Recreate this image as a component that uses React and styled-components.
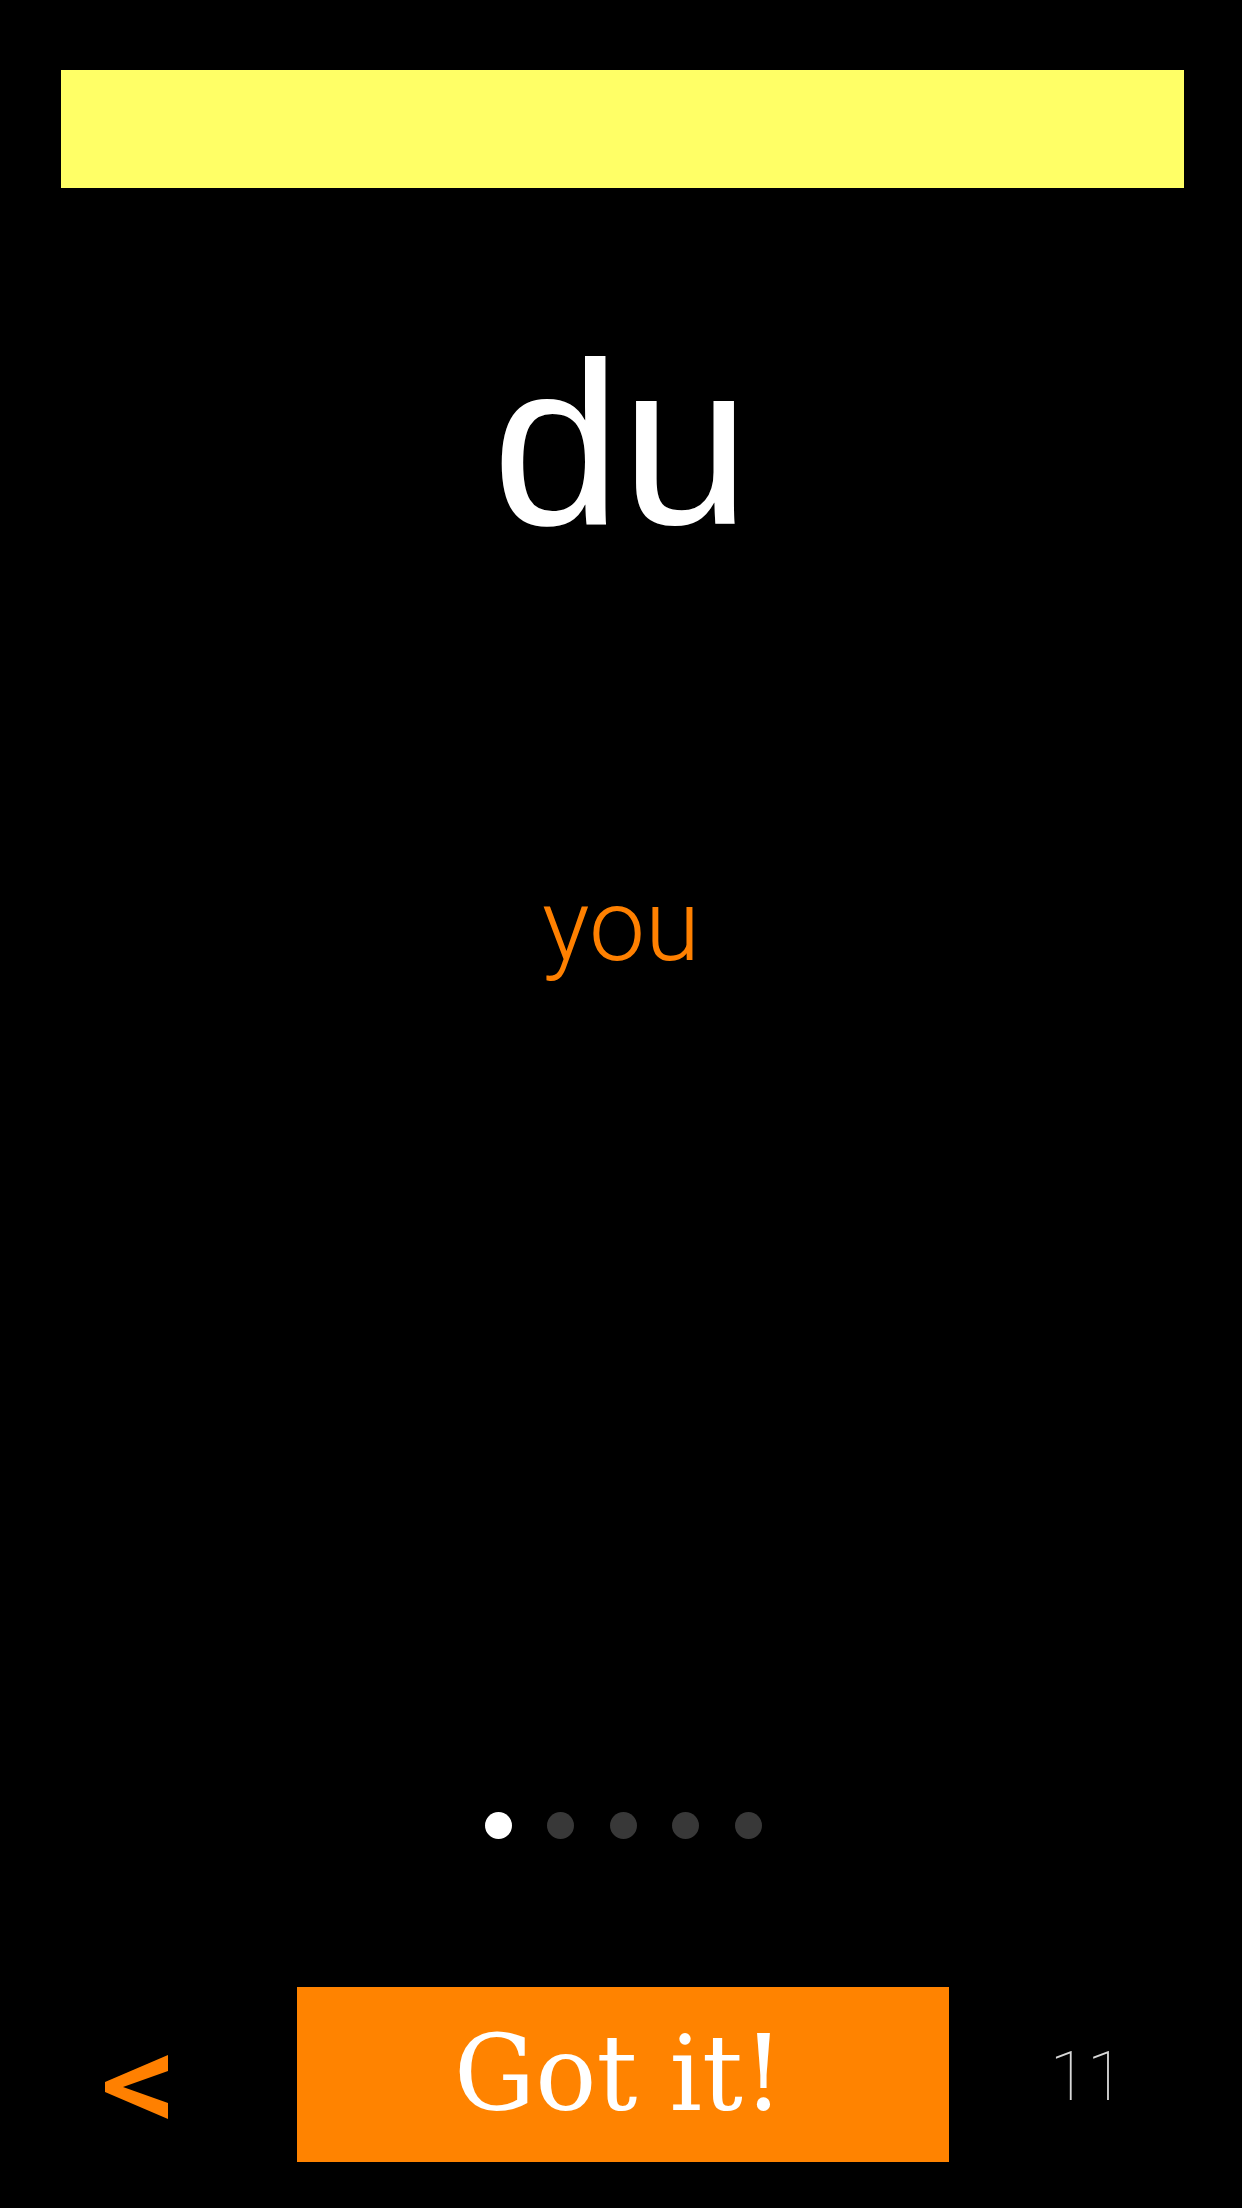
import React from "react";
import styled, { createGlobalStyle } from "styled-components";

const GlobalStyle = createGlobalStyle`
  html, body {
    margin: 0;
    padding: 0;
    background: #000;
  }
  body {
    width: 1242px;
    height: 2208px;
    overflow: hidden;
  }
`;

const Screen = styled.div`
  box-sizing: border-box;
  width: 1242px;
  height: 2208px;
  background: #000;
  padding-top: 70px;
  display: flex;
  flex-direction: column;
`;

const Banner = styled.div`
  margin-left: 61px;
  width: 1123px;
  height: 118px;
  background: #ffff66;
`;

const Word = styled.div`
  margin-top: 140px;
  font-family: "Liberation Sans", Arial, sans-serif;
  font-size: 232px;
  line-height: 1;
  color: #fff;
  text-align: center;
`;

const Translation = styled.div`
  margin-top: 316px;
  font-family: Roboto, "Liberation Sans", sans-serif;
  font-weight: 300;
  font-size: 100px;
  line-height: 1;
  color: #ff8000;
  text-align: center;
`;

const Dots = styled.div`
  margin-top: 836px;
  display: flex;
  justify-content: center;
  gap: 35.5px;
  padding-left: 4px;
`;

const Dot = styled.span`
  width: 27px;
  height: 27px;
  border-radius: 50%;
  background: ${(p) => (p.$active ? "#ffffff" : "#383838")};
`;

const Footer = styled.div`
  margin-top: 148px;
  display: grid;
  grid-template-columns: 297px 652px 1fr;
  height: 175px;
  align-items: center;
`;

const BackButton = styled.div`
  display: flex;
  padding-left: 105px;
  padding-top: 25px;
  color: #ff8000;
  svg {
    display: block;
  }
`;

const GotIt = styled.div`
  height: 175px;
  background: #ff8300;
  display: flex;
  align-items: center;
  justify-content: center;
  font-family: "DejaVu Serif Condensed", "DejaVu Serif", serif;
  font-size: 100px;
  line-height: 1;
  color: #fff;
  span {
    display: inline-block;
    transform: translateX(-4px) scale(1.13, 1.04);
  }
`;

const Count = styled.div`
  font-family: Roboto, "Liberation Sans", sans-serif;
  font-weight: 100;
  font-size: 68px;
  line-height: 1;
  color: #d8d8d8;
  text-align: center;
  padding-right: 17px;
  padding-top: 5px;
`;

function Chevron() {
  return (
    <svg width="63" height="64" viewBox="0 0 63 64" aria-label="back">
      <polygon
        points="63,0 63,16 18,32 63,48 63,64 0,37 0,27"
        fill="currentColor"
      />
    </svg>
  );
}

export default function App() {
  return (
    <>
      <GlobalStyle />
      <Screen>
        <Banner />
        <Word>du</Word>
        <Translation>you</Translation>
        <Dots>
          {[0, 1, 2, 3, 4].map((i) => (
            <Dot key={i} $active={i === 0} />
          ))}
        </Dots>
        <Footer>
          <BackButton>
            <Chevron />
          </BackButton>
          <GotIt>
            <span>Got it!</span>
          </GotIt>
          <Count>11</Count>
        </Footer>
      </Screen>
    </>
  );
}
